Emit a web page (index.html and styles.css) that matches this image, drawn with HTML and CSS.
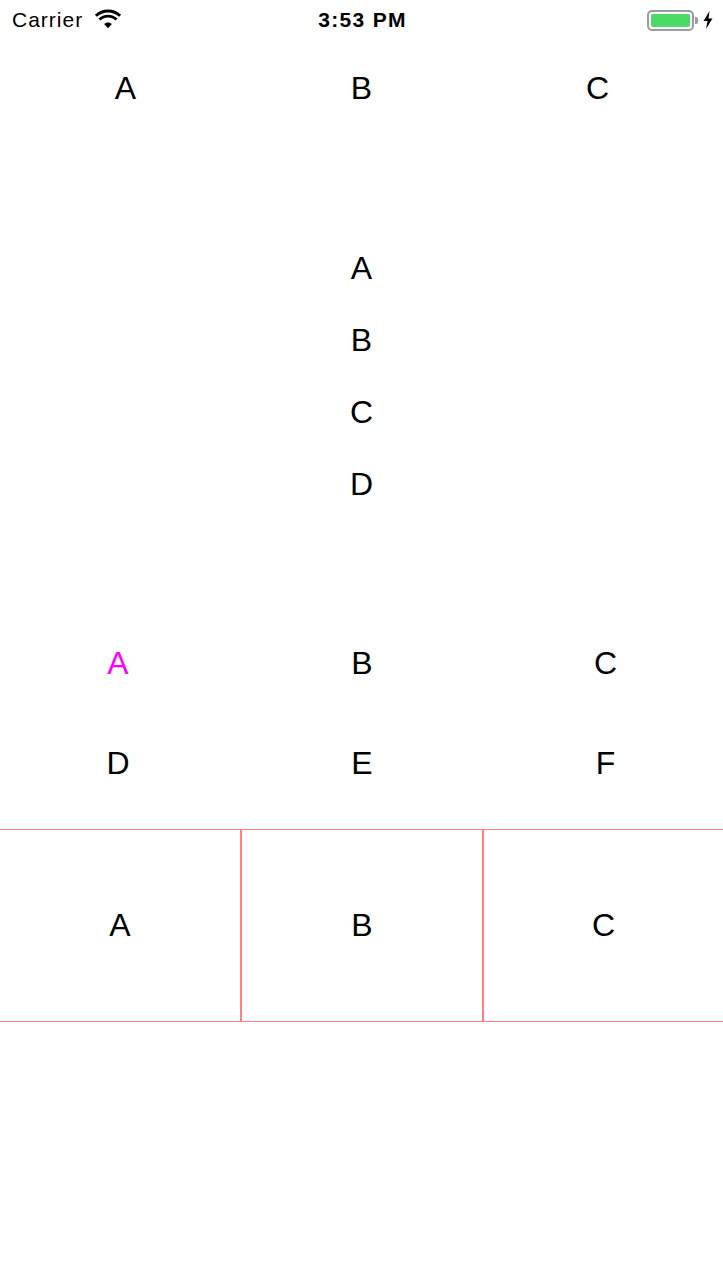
FILE: index.html
```html
<!DOCTYPE html>
<html lang="en">
<head>
    <meta charset="UTF-8">
    <title>Layout demo</title>
    <link rel="stylesheet" href="styles.css">
</head>
<body>
<div class="status">
    <div class="status-left">
        <span class="carrier">Carrier</span>
        <svg class="wifi" width="28" height="20" viewBox="0 0 28 20">
            <path d="M14 3.5c4.3 0 8.2 1.6 11.1 4.3l2-2.1C23.6 2.5 19 0.6 14 0.6S4.4 2.5 0.9 5.7l2 2.1C5.8 5.1 9.7 3.5 14 3.5z" fill="#000"/>
            <path d="M14 8.6c2.9 0 5.5 1.1 7.5 2.9l2-2.1c-2.5-2.3-5.8-3.7-9.5-3.7S7 7.1 4.5 9.4l2 2.1c2-1.8 4.6-2.9 7.5-2.9z" fill="#000"/>
            <path d="M14 13.6c1.5 0 2.9 0.6 3.9 1.5L14 19.2l-3.9-4.1c1-0.9 2.4-1.5 3.9-1.5z" fill="#000"/>
        </svg>
    </div>
    <div class="time">3:53 PM</div>
    <div class="status-right">
        <div class="battery"><div class="battery-fill"></div></div>
        <div class="battery-nub"></div>
        <svg class="bolt" width="10" height="18" viewBox="0 0 10 18">
            <path d="M6.5 0L0.5 10h4L3 18l6.5-10.5h-4L6.5 0z" fill="#000"/>
        </svg>
    </div>
</div>

<div class="row-top">
    <div class="cell">A</div>
    <div class="cell">B</div>
    <div class="cell">C</div>
</div>

<div class="column">
    <div class="item">A</div>
    <div class="item">B</div>
    <div class="item">C</div>
    <div class="item">D</div>
</div>

<div class="grid">
    <div class="grid-cell pink">A</div>
    <div class="grid-cell">B</div>
    <div class="grid-cell">C</div>
    <div class="grid-cell">D</div>
    <div class="grid-cell">E</div>
    <div class="grid-cell">F</div>
</div>

<div class="boxes">
    <div class="box">A</div>
    <div class="box">B</div>
    <div class="box">C</div>
</div>
</body>
</html>
```

FILE: styles.css
```css
* {
    padding: 0;
    margin: 0;
    box-sizing: border-box;
}

body {
    width: 723px;
    height: 1286px;
    background: #fff;
    color: #000;
    font-family: "Liberation Sans", Arial, sans-serif;
    overflow: hidden;
}

.status {
    height: 40px;
    display: flex;
    align-items: center;
    justify-content: space-between;
    padding: 0 10px 0 12px;
}

.status-left {
    display: flex;
    align-items: center;
    gap: 11px;
    width: 200px;
}

.carrier {
    font-size: 21px;
    letter-spacing: 1px;
}

.wifi {
    margin-top: -2px;
}

.time {
    font-size: 21px;
    font-weight: bold;
    letter-spacing: 1.3px;
}

.status-right {
    width: 200px;
    display: flex;
    align-items: center;
    justify-content: flex-end;
}

.battery {
    width: 47px;
    height: 21px;
    border: 2px solid #9b9b9b;
    border-radius: 5px;
    padding: 2px;
}

.battery-fill {
    width: 100%;
    height: 100%;
    background: #4cd964;
    border-radius: 2px;
}

.battery-nub {
    width: 3px;
    height: 7px;
    background: #9b9b9b;
    border-radius: 0 2px 2px 0;
    margin-left: 1px;
}

.bolt {
    margin-left: 5px;
}

.row-top {
    display: grid;
    grid-template-columns: repeat(3, 236px);
    justify-content: center;
    height: 96px;
    font-size: 32px;
}

.row-top .cell {
    display: flex;
    align-items: center;
    justify-content: center;
}

.column {
    margin-top: 96px;
    font-size: 32px;
}

.column .item {
    height: 72px;
    display: flex;
    align-items: center;
    justify-content: center;
}

.grid {
    margin-top: 93px;
    display: grid;
    grid-template-columns: 236px 252px 1fr;
    grid-auto-rows: 100px;
    font-size: 32px;
}

.grid-cell {
    display: flex;
    align-items: center;
    justify-content: center;
}

.grid-cell.pink {
    color: #ff00ff;
}

.boxes {
    margin-top: 16px;
    height: 193px;
    display: grid;
    grid-template-columns: 240px 242px 1fr;
    border-top: 1px solid #ff8080;
    border-bottom: 1px solid #ff8080;
    font-size: 32px;
}

.box {
    display: flex;
    align-items: center;
    justify-content: center;
}

.box + .box {
    border-left: 2px solid #ff8080;
}
```
